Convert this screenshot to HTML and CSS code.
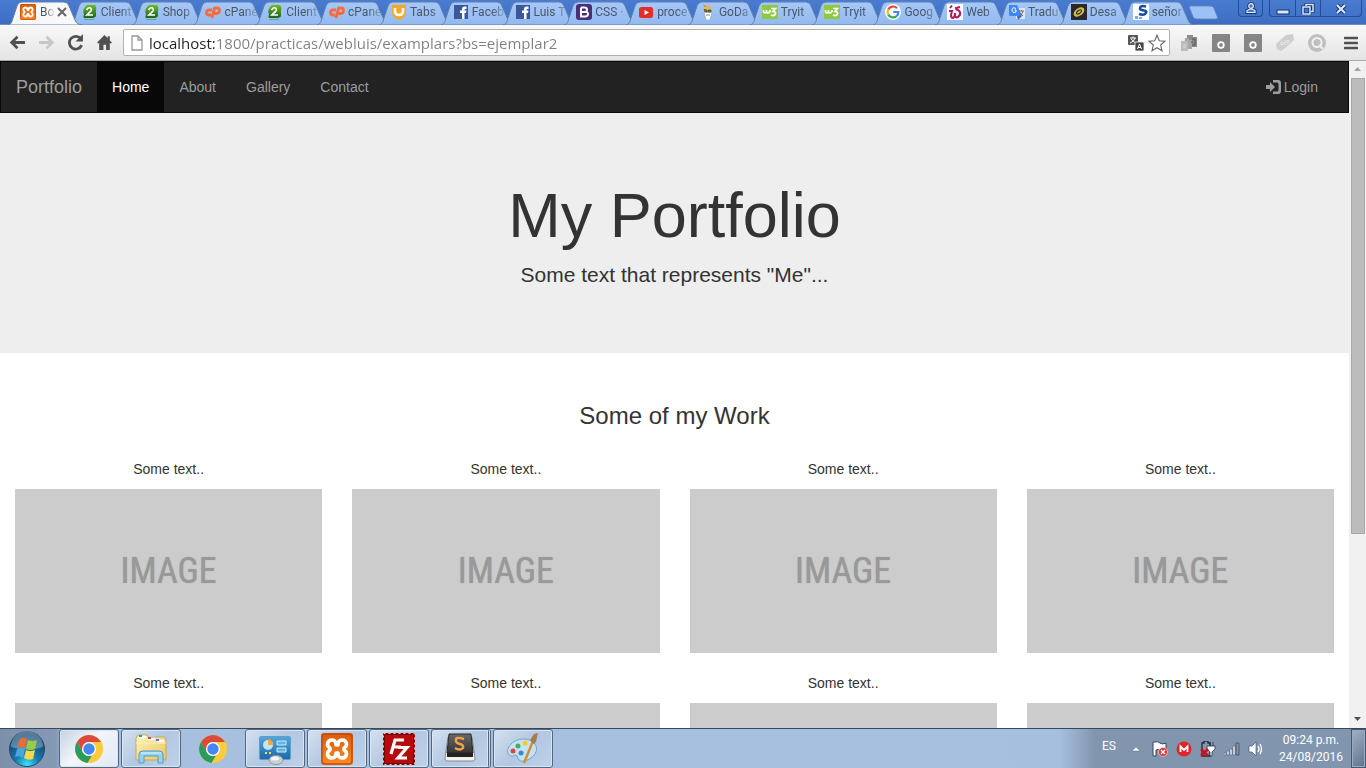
FILE: index.html
```html
<!DOCTYPE html>
<html lang="en">
<head>
<meta charset="utf-8">
<title>My Portfolio</title>
<link rel="stylesheet" href="styles.css">
</head>
<body>
<svg class="defs" aria-hidden="true">
  <defs>
    <linearGradient id="gTab" x1="0" y1="0" x2="0" y2="1"><stop offset="0" stop-color="#a6c8f8"/><stop offset="1" stop-color="#92b9ef"/></linearGradient>
    <linearGradient id="gGreen" x1="0" y1="0" x2="0" y2="1"><stop offset="0" stop-color="#6ebd1f"/><stop offset="1" stop-color="#17651c"/></linearGradient>
    <linearGradient id="gOrange" x1="0" y1="0" x2="0" y2="1"><stop offset="0" stop-color="#d95b0a"/><stop offset="1" stop-color="#fb8a24"/></linearGradient>
    <radialGradient id="gOrb" cx=".5" cy=".95" r=".85"><stop offset="0" stop-color="#3ee5fa"/><stop offset=".4" stop-color="#167bb0"/><stop offset="1" stop-color="#173e64"/></radialGradient>
    <linearGradient id="gFolder" x1="0" y1="0" x2="1" y2="1"><stop offset="0" stop-color="#fff5bb"/><stop offset="1" stop-color="#e9c65f"/></linearGradient>
    <linearGradient id="gPanel" x1="0" y1="0" x2="0" y2="1"><stop offset="0" stop-color="#51a8dd"/><stop offset="1" stop-color="#1d67a9"/></linearGradient>
    <linearGradient id="gKey" x1="0" y1="0" x2="0" y2="1"><stop offset="0" stop-color="#696969"/><stop offset="1" stop-color="#343434"/></linearGradient>
  </defs>
  <symbol id="tab" viewBox="0 0 74 25" preserveAspectRatio="none"><path d="M0 25C4 24 4 21 5 18L9 6Q10 2 14 2H56Q60 2 61 6L67 20Q69 25 74 25Z"/></symbol>
  <symbol id="xampp" viewBox="0 0 32 32"><rect width="32" height="32" rx="3" fill="url(#gOrange)"/><rect x="1" y="1" width="30" height="30" rx="3" fill="none" stroke="#c94b08" stroke-width="1.5"/><path d="M11 7C6 7 5 13 9 15V17C5 19 6 25 11 25Q15 25 15 20H17Q17 25 21 25C26 25 27 19 23 17V15C27 13 26 7 21 7Q17 7 17 12H15Q15 7 11 7Z" fill="none" stroke="#fff" stroke-width="3.600" stroke-linejoin="round"/></symbol>
  <symbol id="client" viewBox="0 0 16 16"><path d="M3 3Q5 0 8 1H13Q15 3 14 7V12Q13 14 9 14H2Q1 13 2 10Q0 7 3 3Z" fill="url(#gGreen)"/><path d="M4.500 6Q6 3 8.500 4Q10.500 6 8 8L5 11H11" fill="none" stroke="#fff" stroke-width="1.700"/><path d="M2 15.500H12" stroke="#789c9c"/></symbol>
  <symbol id="cpanel" viewBox="0 0 16 16"><path d="M7 6H4Q1.500 6 1.500 8.500T4 11H6M7 14L9.500 4H12Q14.500 4 14.500 6.500T12 9.500H9" fill="none" stroke="#f96b3b" stroke-width="2.800" stroke-linejoin="round"/></symbol>
  <symbol id="tabs" viewBox="0 0 16 16"><path d="M1 1H15V9Q15 13 8 16Q1 13 1 9Z" fill="#f6a821"/><path d="M4 4V7Q4 11 8 11T12 7V4" fill="none" stroke="#fff" stroke-width="2.600"/></symbol>
  <symbol id="fb" viewBox="0 0 16 16"><rect x="1" y="1" width="14" height="14" fill="#3d579b"/><path d="M9 15V9H7V6.500H9V5Q9 2.500 11.500 2.500H13.500V5H12Q11.500 5 11.500 6.500H13.500L13 9H11.500V15Z" fill="#fff"/></symbol>
  <symbol id="boot" viewBox="0 0 16 16"><rect width="16" height="16" rx="3" fill="#4b2e78"/><path d="M5 3.500V12.500H9Q12 12.500 12 10T9 8H5M5 3.500H8.500Q11 3.500 11 5.700T8.500 8" fill="none" stroke="#fff" stroke-width="1.900"/></symbol>
  <symbol id="yt" viewBox="0 0 16 16"><rect x="1" y="3" width="14" height="11" rx="2.500" fill="#e52d27"/><path d="M6.500 6L11 8.500L6.500 11Z" fill="#fff"/></symbol>
  <symbol id="daddy" viewBox="0 0 16 16"><path d="M3 0L8 3L6 6Z" fill="#e78734"/><ellipse cx="8" cy="5.500" rx="4" ry="3.500" fill="#e5b65e"/><path d="M4 8L12 8.500L10 16H6Z" fill="#fff" stroke="#999" stroke-width=".6"/><path d="M4 5.500L7 6V8H5ZM8 6H11V8H8Z" fill="#55963c" stroke="#444" stroke-width=".7"/><path d="M6 11H10" stroke="#888"/></symbol>
  <symbol id="w3" viewBox="0 0 16 16"><rect y="1" width="16" height="14" fill="#8dc83f"/><path d="M1.500 6V8Q3 10 4.500 8V6M4.500 8Q6 10 8 7.500V6M9 4.500H13.500L11 7.500Q14 7.500 13.500 10Q12 12.500 9 11" fill="none" stroke="#fff" stroke-width="1.700"/></symbol>
  <symbol id="google" viewBox="0 0 16 16"><circle cx="8" cy="8" r="8" fill="#fff"/><g fill="none" stroke-width="2.200"><path d="M12 4.200A5.500 5.500 0 0 0 3.200 5.400" stroke="#ea4335"/><path d="M3.200 5.400A5.500 5.500 0 0 0 3.200 10.600" stroke="#fbbc05"/><path d="M3.200 10.600A5.500 5.500 0 0 0 11.600 12.100" stroke="#34a853"/><path d="M11.600 12.100Q13.500 10.500 13.300 8H8.300" stroke="#4285f4"/></g></symbol>
  <symbol id="webtab" viewBox="0 0 16 16"><rect width="16" height="16" fill="#fff"/><path d="M5 1.500L3 4M2 7H5L4 11Q4 14 6 14Q8 13 8 9V12Q9 14 11 13Q14 11 13 8L11 6Q9 6 9 4L13 3" fill="none" stroke="#b51961" stroke-width="2"/></symbol>
  <symbol id="translate" viewBox="0 0 16 16"><rect x="7" y="4" width="9" height="11" fill="#e4e4e4"/><path d="M0 1H8L13 12H1L0 11Z" fill="#4285f4"/><path d="M8 12H13L9 16Z" fill="#3067ca"/><path d="M7 4.500Q3 2.500 3 6T7 8V6H5.500" fill="none" stroke="#fff"/><path d="M10 7H15M12.500 6V7M14 7Q13 11 10.500 12M11 9L14 12" fill="none" stroke="#667" stroke-width=".9"/></symbol>
  <symbol id="desa" viewBox="0 0 16 16"><rect width="16" height="16" fill="#29292b"/><ellipse cx="8" cy="8" rx="6" ry="3.800" transform="rotate(-35 8 8)" fill="#d1b950"/><ellipse cx="8" cy="8" rx="2.800" ry="1.500" transform="rotate(-35 8 8)" fill="#d1b950" stroke="#29292b"/></symbol>
  <symbol id="senor" viewBox="0 0 16 16"><rect width="16" height="16" fill="#fff"/><path d="M13 2.500Q7 1 7 4.500Q7 6 11 6.500T12 10Q10 11.500 6 10" fill="none" stroke="#164d9d" stroke-width="2.600"/><path d="M2 12H5V15H2ZM6 13H9V15H6Z" fill="#79a8db"/></symbol>
  <symbol id="chrome" viewBox="0 0 32 32"><circle cx="16" cy="16" r="14" fill="#fbcb3c"/><path d="M3.900 9A14 14 0 0 1 28.100 9H16A7 7 0 0 0 10 12.500L9.900 19.500Z" fill="#dc4a3d"/><path d="M3.900 9L9.940 19.500A7 7 0 0 0 19 22.300L14.500 29.900A14 14 0 0 1 3.900 9Z" fill="#269d5a"/><circle cx="16" cy="16" r="7" fill="#fff"/><circle cx="16" cy="16" r="5.700" fill="#4687f4"/></symbol>
</svg>

<header class="browser">
  <div class="tabstrip">
    <nav class="tabs" aria-label="Tabs">
      <button class="tab active"><svg class="shape"><use href="#tab"/></svg><svg class="fav"><use href="#xampp"/></svg><span class="label">Bo</span><svg class="close" viewBox="0 0 10 10"><path d="M1 1L9 9M9 1L1 9"/></svg></button>
      <button class="tab"><svg class="shape"><use href="#tab"/></svg><svg class="fav"><use href="#client"/></svg><span class="label">Client</span></button>
      <button class="tab"><svg class="shape"><use href="#tab"/></svg><svg class="fav"><use href="#client"/></svg><span class="label">Shop</span></button>
      <button class="tab"><svg class="shape"><use href="#tab"/></svg><svg class="fav"><use href="#cpanel"/></svg><span class="label">cPane</span></button>
      <button class="tab"><svg class="shape"><use href="#tab"/></svg><svg class="fav"><use href="#client"/></svg><span class="label">Client</span></button>
      <button class="tab"><svg class="shape"><use href="#tab"/></svg><svg class="fav"><use href="#cpanel"/></svg><span class="label">cPane</span></button>
      <button class="tab"><svg class="shape"><use href="#tab"/></svg><svg class="fav"><use href="#tabs"/></svg><span class="label">Tabs</span></button>
      <button class="tab"><svg class="shape"><use href="#tab"/></svg><svg class="fav"><use href="#fb"/></svg><span class="label">Faceb</span></button>
      <button class="tab"><svg class="shape"><use href="#tab"/></svg><svg class="fav"><use href="#fb"/></svg><span class="label">Luis T</span></button>
      <button class="tab"><svg class="shape"><use href="#tab"/></svg><svg class="fav"><use href="#boot"/></svg><span class="label">CSS ·</span></button>
      <button class="tab"><svg class="shape"><use href="#tab"/></svg><svg class="fav"><use href="#yt"/></svg><span class="label">proce</span></button>
      <button class="tab"><svg class="shape"><use href="#tab"/></svg><svg class="fav"><use href="#daddy"/></svg><span class="label">GoDa</span></button>
      <button class="tab"><svg class="shape"><use href="#tab"/></svg><svg class="fav"><use href="#w3"/></svg><span class="label">Tryit</span></button>
      <button class="tab"><svg class="shape"><use href="#tab"/></svg><svg class="fav"><use href="#w3"/></svg><span class="label">Tryit</span></button>
      <button class="tab"><svg class="shape"><use href="#tab"/></svg><svg class="fav"><use href="#google"/></svg><span class="label">Goog</span></button>
      <button class="tab"><svg class="shape"><use href="#tab"/></svg><svg class="fav"><use href="#webtab"/></svg><span class="label">Web</span></button>
      <button class="tab"><svg class="shape"><use href="#tab"/></svg><svg class="fav"><use href="#translate"/></svg><span class="label">Tradu</span></button>
      <button class="tab"><svg class="shape"><use href="#tab"/></svg><svg class="fav"><use href="#desa"/></svg><span class="label">Desa</span></button>
      <button class="tab"><svg class="shape"><use href="#tab"/></svg><svg class="fav"><use href="#senor"/></svg><span class="label">señor</span></button>
    </nav>
    <button class="newtab" aria-label="New tab"><svg viewBox="0 0 32 16"><path d="M1 1H23Q26 1 27 3L31 13Q31 15 29 15H9Q6 15 5 13L1 3Z"/></svg></button>
    <button class="winbtn user" aria-label="Profile"><svg viewBox="0 0 14 12"><g fill="#4877c9"><path d="M3 10.500V8.500L6 7H8L11 8.500V10.500Z" stroke="#173368" stroke-width="3"/><circle cx="7" cy="4" r="2.300" stroke="#173368" stroke-width="3"/><path d="M3 10.500V8.500L6 7H8L11 8.500V10.500Z" stroke="#e6eefb" stroke-width="1.200"/><circle cx="7" cy="4" r="2.300" stroke="#e6eefb" stroke-width="1.200"/></g></svg></button>
    <div class="wincontrols">
      <button class="winbtn" aria-label="Minimize"><svg viewBox="0 0 14 12"><rect x="1" y="7" width="12" height="4" fill="#dbe8fb" stroke="#173368"/></svg></button>
      <button class="winbtn" aria-label="Restore"><svg viewBox="0 0 14 12"><g fill="none"><path d="M5 3V1.500H12V8.500H10M2 4H9V11H2Z" stroke="#173368" stroke-width="3"/><path d="M5 3V1.500H12V8.500H10M2 4H9V11H2Z" stroke="#dbe8fb" stroke-width="1.500"/></g></svg></button>
      <button class="winbtn wide" aria-label="Close"><svg viewBox="0 0 14 12"><path d="M3 2L11 10M11 2L3 10" stroke="#173368" stroke-width="4"/><path d="M3 2L11 10M11 2L3 10" stroke="#dbe8fb" stroke-width="2.200"/></svg></button>
    </div>
  </div>
  <div class="toolbar">
    <button aria-label="Back"><svg viewBox="0 0 16 16"><path d="M15 8H3M8 2.500L2.500 8L8 13.500" fill="none" stroke="#505050" stroke-width="2.600"/></svg></button>
    <button aria-label="Forward"><svg viewBox="0 0 16 16"><path d="M1 8H13M8 2.500L13.500 8L8 13.500" fill="none" stroke="#c8c8c8" stroke-width="2.600"/></svg></button>
    <button aria-label="Reload"><svg viewBox="0 0 16 16"><path d="M13 4.500A6 6 0 1 0 13.800 10.500" fill="none" stroke="#505050" stroke-width="2.600"/><path d="M15 0V7H8Z" fill="#505050"/></svg></button>
    <button aria-label="Home"><svg viewBox="0 0 16 16"><path d="M8 1L1 8L2 9L3 8.500V15H7V10H9.500V15H13V8.500L14 9L15 8L13 6V2H11V4Z" fill="#505050"/></svg></button>
    <div class="address">
      <svg class="page" viewBox="0 0 12 16"><path d="M1 1H7L11 5V15H1ZM7 1V5H11" fill="#fff" stroke="#999" stroke-width="1.300"/></svg>
      <input type="text" aria-label="Address" value="localhost:1800/practicas/webluis/examplars?bs=ejemplar2">
      <button aria-label="Translate"><svg viewBox="0 0 16 16"><rect width="10" height="10" rx="1" fill="#555"/><path d="M2 3H8M5 1.500V3M7 3Q6 7 2 8M3 4L7.500 8" fill="none" stroke="#fff"/><rect x="7" y="7" width="9" height="9" rx="1" fill="#444" stroke="#fff" stroke-width=".8"/><path d="M9.500 14L11.500 9L13.500 14M10 12.500H13" fill="none" stroke="#fff"/></svg></button>
      <button class="star" aria-label="Bookmark"><svg viewBox="0 0 18 18"><path d="M9 1.200L11.300 6.700L17 7.200L12.700 11L14 16.800L9 13.700L4 16.800L5.300 11L1 7.200L6.700 6.700Z" fill="#fff" stroke="#666" stroke-width="1.100"/></svg></button>
    </div>
    <div class="extensions">
      <button aria-label="Copy"><svg viewBox="0 0 18 18"><path d="M7 1H13V3H17V13H7Z" fill="#8b8b8b"/><path d="M5 4H9V6H12V15H4Z" fill="#a7a7a7"/><path d="M1 7H8V17H1Z" fill="#bcbcbc"/><path d="M12 5H15V11H12M11 8H13" fill="none" stroke="#555"/><path d="M3 11H6M3 13H6" stroke="#ddd"/></svg></button>
      <button aria-label="Extension one"><svg viewBox="0 0 18 18"><rect width="18" height="18" rx="1" fill="#858585"/><circle cx="9" cy="11" r="2.800" fill="none" stroke="#fff" stroke-width="1.800"/></svg></button>
      <button aria-label="Extension two"><svg viewBox="0 0 18 18"><rect width="18" height="18" rx="1" fill="#858585"/><circle cx="9" cy="11" r="2.800" fill="none" stroke="#fff" stroke-width="1.800"/></svg></button>
      <button aria-label="Coupons"><svg viewBox="0 0 18 18"><path d="M0 10L10 1L17 0L18 6L8 15L5 17L1 15Z" fill="#cecece"/><g fill="none" stroke="#ececec"><circle cx="6" cy="9.500" r="1.300"/><path d="M9 6V11"/><circle cx="12" cy="7.500" r="1.300"/></g></svg></button>
      <button aria-label="Search"><svg viewBox="0 0 18 18"><circle cx="9" cy="9" r="9" fill="#bfbfbf"/><circle cx="9" cy="8.500" r="4.500" fill="none" stroke="#f1f1f1" stroke-width="2"/><path d="M11 11L15 15" stroke="#f1f1f1" stroke-width="2"/></svg></button>
      <button class="menu" aria-label="Menu"><svg viewBox="0 0 14 14"><path d="M1 2H13M1 7H13M1 12H13" stroke="#505050" stroke-width="2.700" stroke-linecap="round"/></svg></button>
    </div>
  </div>
</header>

<div class="viewport">
  <div class="document">
    <nav class="navbar">
      <a class="brand" href="#">Portfolio</a>
      <a class="current" href="#">Home</a>
      <a href="#">About</a>
      <a href="#">Gallery</a>
      <a href="#">Contact</a>
      <a class="login" href="#"><svg viewBox="0 0 15 14"><path d="M0 5H4V2L9 7L4 12V9H0Z"/><path d="M7 0H12Q15 0 15 3V11Q15 14 12 14H7V11.500H11Q12.500 11.500 12.500 10V4Q12.500 2.500 11 2.500H7Z"/></svg>Login</a>
    </nav>
    <section class="jumbotron">
      <h1>My Portfolio</h1>
      <p>Some text that represents "Me"...</p>
    </section>
    <main>
      <h3>Some of my Work</h3>
      <div class="gallery">
        <figure><figcaption>Some text..</figcaption><div class="thumb">IMAGE</div></figure>
        <figure><figcaption>Some text..</figcaption><div class="thumb">IMAGE</div></figure>
        <figure><figcaption>Some text..</figcaption><div class="thumb">IMAGE</div></figure>
        <figure><figcaption>Some text..</figcaption><div class="thumb">IMAGE</div></figure>
        <figure><figcaption>Some text..</figcaption><div class="thumb"></div></figure>
        <figure><figcaption>Some text..</figcaption><div class="thumb"></div></figure>
        <figure><figcaption>Some text..</figcaption><div class="thumb"></div></figure>
        <figure><figcaption>Some text..</figcaption><div class="thumb"></div></figure>
      </div>
    </main>
  </div>
  <div class="scrollbar">
    <svg viewBox="0 0 17 17"><path d="M5 10L8.500 6L12 10Z" fill="#a3a3a3"/></svg>
    <div class="track"><div class="handle"></div></div>
    <svg viewBox="0 0 17 17"><path d="M5 6L8.500 10L12 6Z" fill="#505050"/></svg>
  </div>
</div>

<footer class="taskbar">
  <button class="start" aria-label="Start"><svg viewBox="0 0 38 38"><circle cx="19" cy="19" r="17.500" fill="url(#gOrb)" stroke="#284c70"/><path d="M3 17A16 16 0 0 1 35 17Q19 22 3 17Z" fill="#b6d4e8" opacity=".4"/><path d="M12 9Q15 7 19 9L17 18Q13 16 9 18Z" fill="#f06c2c"/><path d="M20 10Q24 12 29 10L27 19Q23 21 18 19Z" fill="#9acb43"/><path d="M9 19Q13 17 17 19L15 28Q11 25 7 27Z" fill="#48a7e1"/><path d="M18 20Q22 22 27 20L25 29Q20 31 16 28Z" fill="#fbd64e"/></svg></button>
  <div class="apps">
    <button class="app lit" aria-label="Chrome"><svg viewBox="0 0 32 32"><use href="#chrome"/></svg></button>
    <button class="app" aria-label="Explorer"><svg viewBox="0 0 32 32"><path d="M1 5L3 2H12L14 5H19L21 4H29L31 7V27H1Z" fill="url(#gFolder)" stroke="#c8a95a"/><path d="M4 4H11M13 6H20M22 8H29" stroke="#fff" stroke-width="2.500"/><path d="M4 3H7" stroke="#31ac48" stroke-width="2"/><path d="M13 5H16" stroke="#d94636" stroke-width="2"/><path d="M21 7H24" stroke="#3a8acf" stroke-width="2"/><path d="M1 10H31" stroke="#fff3b4"/><path d="M4 30V21Q4 18 8 18H24Q28 18 28 21V30H23V23H9V30Z" fill="#91d3f0" stroke="#529bc3"/><path d="M6 20H26" stroke="#e1f7ff"/></svg></button>
    <button class="app plain" aria-label="Chrome pinned"><svg viewBox="0 0 32 32"><use href="#chrome"/></svg></button>
    <button class="app" aria-label="Control panel"><svg viewBox="0 0 32 32"><rect x=".5" y="3.500" width="31" height="23" rx="1.500" fill="url(#gPanel)" stroke="#5f9fc8"/><circle cx="9" cy="12" r="5" fill="#c3e5f6"/><path d="M9 12V6A6 6 0 0 1 14.500 12Z" fill="#f7a83a"/><path d="M18 8H27V12H18ZM18 15H27V19H18Z" fill="#5eb4e7" stroke="#cceafb"/><path d="M6 20H8M10 20H12" stroke="#ffd56b" stroke-width="2"/><ellipse cx="17" cy="27" rx="7" ry="4.500" fill="#ccd0d4" stroke="#8f979f"/><ellipse cx="16" cy="25.500" rx="4" ry="2" fill="#f3f5f6"/></svg></button>
    <button class="app" aria-label="XAMPP"><svg viewBox="0 0 32 32"><use href="#xampp"/></svg></button>
    <button class="app" aria-label="FileZilla"><svg viewBox="0 0 32 32"><rect x="1" y="1" width="30" height="30" fill="#b70b0b" stroke="#7c0505" stroke-width="2"/><rect x=".5" y=".5" width="31" height="31" fill="none" stroke="#e8c4c4" stroke-dasharray="2 3"/><path d="M8 21L12 7H21M10 14H18M15 14.500H24L15 25H24" fill="none" stroke="#fff" stroke-width="3.200"/></svg></button>
    <button class="app stack" aria-label="Sublime Text"><svg viewBox="0 0 32 32"><path d="M4 4H28L31 25Q31 28 29 28H3Q1 28 1 25Z" fill="#f2f2f2" stroke="#888"/><path d="M5 1H27L29 20H3Z" fill="url(#gKey)" stroke="#292929"/><path d="M3 20H29V24H3Z" fill="#222"/><path d="M20 6Q11 3 12 8Q12 10 16 11T19 15Q16 18 11 15" fill="none" stroke="#f4a144" stroke-width="2.400"/></svg></button>
    <button class="app" aria-label="Paint"><svg viewBox="0 0 32 32"><path d="M17 6C3 6-2 18 2 22Q5 25 8 22Q11 22 11 26Q15 31 24 25C35 17 28 6 17 6Z" fill="#c4e3f2" stroke="#72a5c4"/><circle cx="6" cy="18" r="2.500" fill="#df4344"/><circle cx="11" cy="13" r="2.500" fill="#48ad58"/><circle cx="18" cy="10" r="2.500" fill="#f2c935"/><circle cx="14" cy="20" r="2.500" fill="#3b8bc6"/><path d="M26 8L17 30" stroke="#d88b36" stroke-width="2.500"/><path d="M23 7L27 1L31 0L29 9L26 11Z" fill="#a77b50"/></svg></button>
  </div>
  <div class="tray">
    <span class="lang">ES</span>
    <button aria-label="Hidden icons"><svg viewBox="0 0 16 16"><path d="M4 10L8 6L12 10Z" fill="#fff" stroke="#66778c" stroke-width=".5"/></svg></button>
    <button aria-label="Action center"><svg viewBox="0 0 16 16"><path d="M1 15V1H3Q6 0 8 2T14 2V9Q11 10 8 9T4 9V15Z" fill="#fff" stroke="#34435b"/><circle cx="11" cy="11" r="4.500" fill="#d63835" stroke="#fff" stroke-width=".5"/><path d="M9 9L13 13M13 9L9 13" stroke="#fff" stroke-width="1.500"/></svg></button>
    <button aria-label="Mega"><svg viewBox="0 0 16 16"><circle cx="8" cy="8" r="7.500" fill="#df2527"/><path d="M4.500 11V5.500L8 9L11.500 5.500V11" fill="none" stroke="#fff" stroke-width="1.800"/></svg></button>
    <button aria-label="Power"><svg viewBox="0 0 16 16"><path d="M2 2H4V0H8V2H10V15H2Z" fill="#8794a8" stroke="#1e293a" stroke-width="1.300"/><path d="M10 1V5M13 1V5M7 5H15V8L12 11V15H10V11L7 8Z" fill="#fff" stroke="#273347" stroke-width=".8"/><path d="M1 8L8 15M8 8L1 15" stroke="#cc1118" stroke-width="2.500"/></svg></button>
    <button aria-label="Network"><svg viewBox="0 0 16 16"><path d="M0 12H2V14H0ZM3 10H5V14H3ZM6 8H8V14H6ZM9 5H11V14H9Z" fill="#fff" stroke="#4b5d76" stroke-width=".6"/><path d="M12 2H15V14H12Z" fill="#8793a8" stroke="#4b5d76"/></svg></button>
    <button aria-label="Volume"><svg viewBox="0 0 16 16"><path d="M1 5H4L8 1V15L4 11H1Z" fill="#fff" stroke="#46566d" stroke-width=".7"/><path d="M10 5Q12 8 10 11M12 3Q15 8 12 13" fill="none" stroke="#fff" stroke-width="1.300"/></svg></button>
    <time class="clock"><span>09:24 p.m.</span><span>24/08/2016</span></time>
    <button class="desktop" aria-label="Show desktop"></button>
  </div>
</footer>
</body>
</html>
```
FILE: styles.css
```css
* { box-sizing: border-box; }
body {
  margin: 0;
  height: 100vh;
  display: flex;
  flex-direction: column;
  overflow: hidden;
  font-family: "Liberation Sans", Arial, sans-serif;
  font-size: 14px;
  line-height: 20px;
  color: #333;
  background: #fff;
}
button { border: 0; padding: 0; background: none; font: inherit; color: inherit; display: flex; align-items: center; justify-content: center; }
svg { display: block; flex: none; }
.defs { position: absolute; width: 0; height: 0; }
.browser, .taskbar { flex: none; font-family: Roboto, "Noto Sans", sans-serif; }

/* Browser frame */
.tabstrip { display: flex; height: 25px; background: linear-gradient(#497cd0, #3d6ec3); border-bottom: 1px solid #6d8cbb; }
.tabs { display: flex; width: 87%; flex: none; padding: 0 6px 0 8px; }
.tab { position: relative; z-index: 0; flex: 1; min-width: 0; justify-content: flex-start; padding-left: 12px; font-size: 12px; color: #4a5669; }
.shape { position: absolute; z-index: -1; left: 0; top: 0; width: 74px; height: 25px; fill: url(#gTab); stroke: #6180ac; overflow: visible; }
.active { z-index: 2; }
.active .shape { fill: #f8f8f8; }
.fav { width: 16px; height: 16px; }
.label { flex: none; margin-left: 3px; white-space: nowrap; mask-image: linear-gradient(to right, #000 20px, #0004 32px); }
.active .label { margin-left: 4px; mask-image: linear-gradient(to right, #000 6px, #0002 14px); }
.close { width: 10px; height: 10px; margin-left: 3px; stroke: #666; stroke-width: 2; }
.newtab { width: 31px; flex: none; }
.newtab svg { width: 31px; height: 15px; fill: #9cc1f5; stroke: #5e82bd; }
.winbtn { width: 25px; height: 17px; }
.winbtn svg { width: 14px; height: 12px; }
.user { margin-left: auto; border: 1px solid #234d95; border-top: 0; border-radius: 0 0 4px 4px; }
.wincontrols { display: flex; height: 17px; margin: 0 4px 0 6px; border: 1px solid #234d95; border-top: 0; border-radius: 0 0 4px 4px; }
.wincontrols .winbtn + .winbtn { border-left: 1px solid #234d95; }
.wincontrols .wide { width: 41px; }
.toolbar { display: flex; align-items: center; height: 36px; padding: 0 8px 0 3px; background: linear-gradient(#f9f9f9, #e4e4e4); border-bottom: 1px solid #aaa; }
.toolbar > button { width: 29px; height: 28px; }
.toolbar > button svg { width: 17px; height: 17px; }
.address { display: flex; align-items: center; flex: 1; height: 27px; margin-left: 4px; padding: 0 3px 0 7px; border: 1px solid #b2b2b2; border-radius: 2px; background: #fff; }
.page { width: 12px; height: 16px; }
.address input {
  flex: 1; min-width: 0; margin: 0 0 0 6px; padding: 0; border: 0; outline: 0;
  font: 15px/22px "Open Sans", "Noto Sans", sans-serif;
  color: transparent;
  background: linear-gradient(to right, #222 66px, #808080 66px);
  background-clip: text;
}
.address button svg { width: 16px; height: 16px; }
.address .star { margin-left: 4px; }
.address .star svg { width: 18px; height: 18px; }
.extensions { display: flex; gap: 14px; margin-left: 10px; }
.extensions svg { width: 18px; height: 18px; }
.extensions .menu { margin-left: 4px; }
.extensions .menu svg { width: 14px; height: 14px; }

/* Page */
.viewport { display: flex; flex: 1; min-height: 0; overflow: hidden; }
.document { flex: 1; min-width: 0; }
.navbar { display: flex; border: 1px solid #080808; background: #222; padding-right: 15px; }
.navbar a { padding: 15px; color: #9d9d9d; text-decoration: none; }
.navbar .brand { font-size: 18px; }
.navbar .current { color: #fff; background: #080808; }
.navbar .login { display: flex; align-items: center; gap: 3px; margin-left: auto; }
.login svg { width: 15px; height: 14px; fill: #9d9d9d; }
.jumbotron { padding: 48px 15px; background: #eee; text-align: center; }
.jumbotron h1 { margin: 20px 0 10px; font-size: 63px; line-height: 69px; font-weight: 400; }
.jumbotron p { margin: 0 0 15px; font-size: 21px; line-height: 30px; }
main { padding: 50px 15px; text-align: center; }
main h3 { margin: 0 0 30px; font-size: 24px; line-height: 26px; font-weight: 400; }
.gallery { display: grid; grid-template-columns: repeat(4, 1fr); gap: 20px 30px; }
.gallery figure { margin: 0; }
.gallery figcaption { margin-bottom: 10px; }
.thumb { display: flex; align-items: center; justify-content: center; aspect-ratio: 307 / 164; background: #ccc; color: #999; font: 400 36px/40px "Roboto Condensed", "Liberation Sans Narrow", "Liberation Sans", sans-serif; text-shadow: 0 0 1px #999; }
.scrollbar { display: flex; flex-direction: column; flex: none; width: 17px; background: #f1f1f1; }
.scrollbar svg { width: 17px; height: 17px; }
.track { flex: 1; padding: 0 1px 0 2px; }
.handle { height: 72%; border: 1px solid #a8a8a8; background: #bcbcbc; }

/* Taskbar */
.taskbar { display: flex; height: 40px; border-top: 1px solid #354860; background: linear-gradient(to right, #7d90aa, #8599b5 55px, #a8c0df 70px, #a6bfdf 1060px, #8295af 1095px, #8295af); }
.start { width: 54px; padding-top: 1px; }
.start svg { width: 38px; height: 38px; }
.apps { display: flex; gap: 2px; padding-left: 5px; }
.app { width: 60px; border: 1px solid #53677f; border-radius: 3px; background: linear-gradient(135deg, #d4e0ef, #b2c7e2 50%, #bfd1e8); box-shadow: inset 0 0 0 1px #d9e5f3; }
.app svg { width: 32px; height: 32px; }
.app.lit { background: linear-gradient(135deg, #c5d2e1, #f3f6fa 45%, #e1e9f3); }
.app.plain { border-color: transparent; background: none; box-shadow: none; }
.app.stack { border-right: 3px double #53677f; }
.tray { display: flex; align-items: center; margin-left: auto; color: #fff; font-size: 12px; }
.lang { margin-right: 12px; padding-bottom: 6px; }
.tray > button { width: 16px; height: 16px; margin-right: 8px; }
.tray svg { width: 16px; height: 16px; }
.clock { display: flex; flex-direction: column; width: 66px; margin: 0 7px 0 6px; text-align: center; line-height: 17px; }
.tray .desktop { width: 15px; height: 39px; margin: 0; border: 1px solid #46586f; background: linear-gradient(135deg, #a1b0c4, #60748f); box-shadow: inset 0 0 0 1px #9caabd; }
```
